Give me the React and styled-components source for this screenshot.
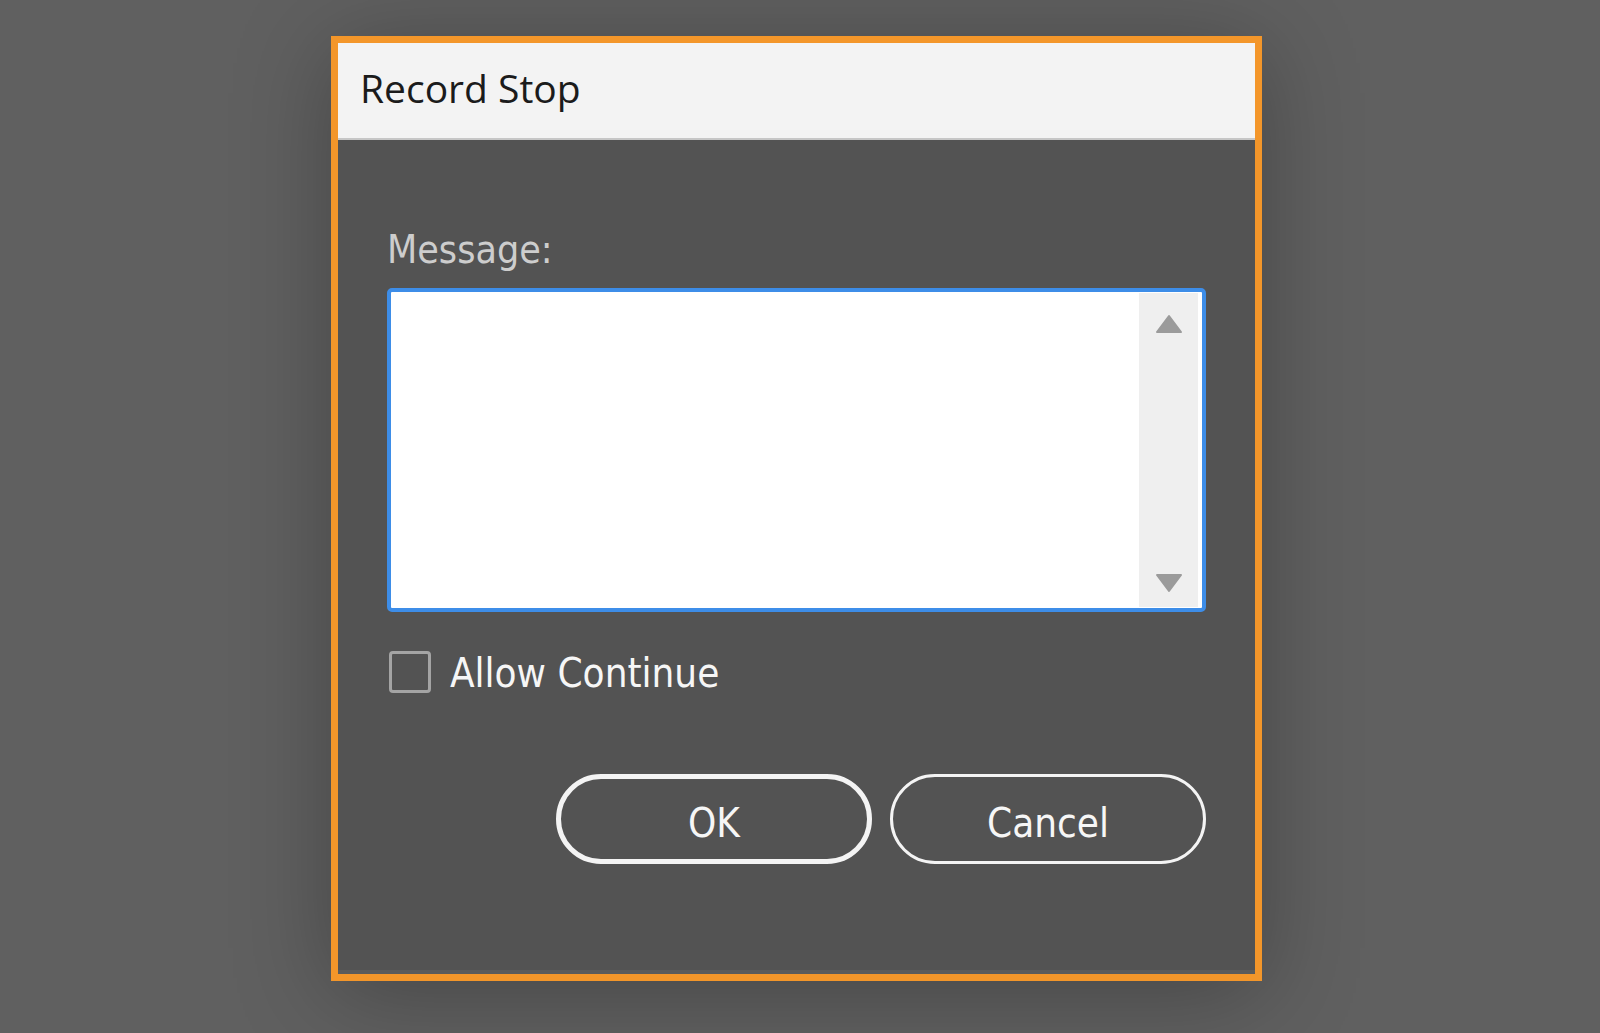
import React, { useState } from 'react';
import styled, { createGlobalStyle } from 'styled-components';

const GlobalStyle = createGlobalStyle`
  html, body {
    margin: 0;
    padding: 0;
    background: #606060;
  }
  * {
    box-sizing: border-box;
  }
`

const Page = styled.div`
  width: 1600px;
  height: 1033px;
  padding: 36px 0 0 331px;
  background: #606060;
  overflow: hidden;
`
const Dialog = styled.div`
  width: 931px;
  border: 7px solid #f3962a;
  background: #535353;
  box-shadow: 0 12px 90px rgba(0, 0, 0, 0.28);
`
const TitleBar = styled.div`
  height: 97px;
  padding: 19px 0 0 22px;
  background: #f3f3f3;
  border-bottom: 2px solid #c6c6c6;
`
const Title = styled.h1`
  margin: 0;
  font-family: "Open Sans", "Noto Sans", sans-serif;
  font-weight: 400;
  font-size: 39px;
  line-height: 52px;
  color: #1b1b1b;
`
const Body = styled.div`
  display: flex;
  flex-direction: column;
  padding: 86px 49px 106px;
  border-bottom: 4px solid #5b5b5b;
  font-family: "DejaVu Sans Condensed", "DejaVu Sans", sans-serif;
  font-stretch: condensed;
`
const FieldLabel = styled.label`
  font-size: 39px;
  line-height: 48px;
  color: #cdcdcd;
`
const MessageBox = styled.div`
  display: flex;
  height: 324px;
  margin-top: 14px;
  padding: 1px 4px 1px 0;
  background: #fff;
  border: 4px solid #3d8de8;
  border-radius: 5px;
`
const TextArea = styled.textarea`
  flex: 1;
  border: none;
  outline: none;
  resize: none;
  padding: 8px 10px;
  font-family: inherit;
  font-size: 24px;
  background: transparent;
  overflow: hidden;
`
const ScrollBar = styled.div`
  display: flex;
  flex-direction: column;
  justify-content: space-between;
  align-items: center;
  width: 59px;
  padding: 21px 0 14px;
  background: #efefef;
`
const Arrow = styled.svg`
  display: block;
  width: 28px;
  height: 20px;
`
const CheckRow = styled.div`
  display: flex;
  align-items: center;
  gap: 19px;
  height: 48px;
  margin-top: 36px;
  padding-left: 2px;
  cursor: pointer;
`
const CheckBox = styled.span`
  width: 42px;
  height: 42px;
  border: 3px solid #a4a4a4;
  border-radius: 4px;
  display: flex;
  align-items: center;
  justify-content: center;
  color: #f4f4f4;
  font-size: 30px;
`
const CheckText = styled.span`
  font-size: 40px;
  line-height: 48px;
  padding-top: 2px;
  color: #f6f6f6;
`
const Buttons = styled.div`
  display: flex;
  justify-content: flex-end;
  gap: 18px;
  margin-top: 78px;
`
const Button = styled.button`
  width: 316px;
  height: 90px;
  padding: 7px 0 0;
  border: ${props => props.primary ? '5px' : '3px'} solid #f4f4f4;
  border-radius: 45px;
  background: transparent;
  color: #f6f6f6;
  font-family: inherit;
  font-stretch: condensed;
  font-size: 40px;
  cursor: pointer;
`

const App = () => {
  const [allow, setAllow] = useState(false);

  return (
    <>
      <GlobalStyle />
      <Page>
        <Dialog>
          <TitleBar>
            <Title>Record Stop</Title>
          </TitleBar>
          <Body>
            <FieldLabel>Message:</FieldLabel>
            <MessageBox>
              <TextArea />
              <ScrollBar>
                <Arrow viewBox="0 0 28 20">
                  <path d="M14 2 L26 18 L2 18 Z" fill="#9b9b9b" stroke="#9b9b9b" strokeWidth="2" strokeLinejoin="round" />
                </Arrow>
                <Arrow viewBox="0 0 28 20">
                  <path d="M2 2 L26 2 L14 18 Z" fill="#9b9b9b" stroke="#9b9b9b" strokeWidth="2" strokeLinejoin="round" />
                </Arrow>
              </ScrollBar>
            </MessageBox>
            <CheckRow onClick={() => setAllow(!allow)}>
              <CheckBox>{allow ? '✓' : ''}</CheckBox>
              <CheckText>Allow Continue</CheckText>
            </CheckRow>
            <Buttons>
              <Button primary>OK</Button>
              <Button>Cancel</Button>
            </Buttons>
          </Body>
        </Dialog>
      </Page>
    </>
  )
}

export default App;
